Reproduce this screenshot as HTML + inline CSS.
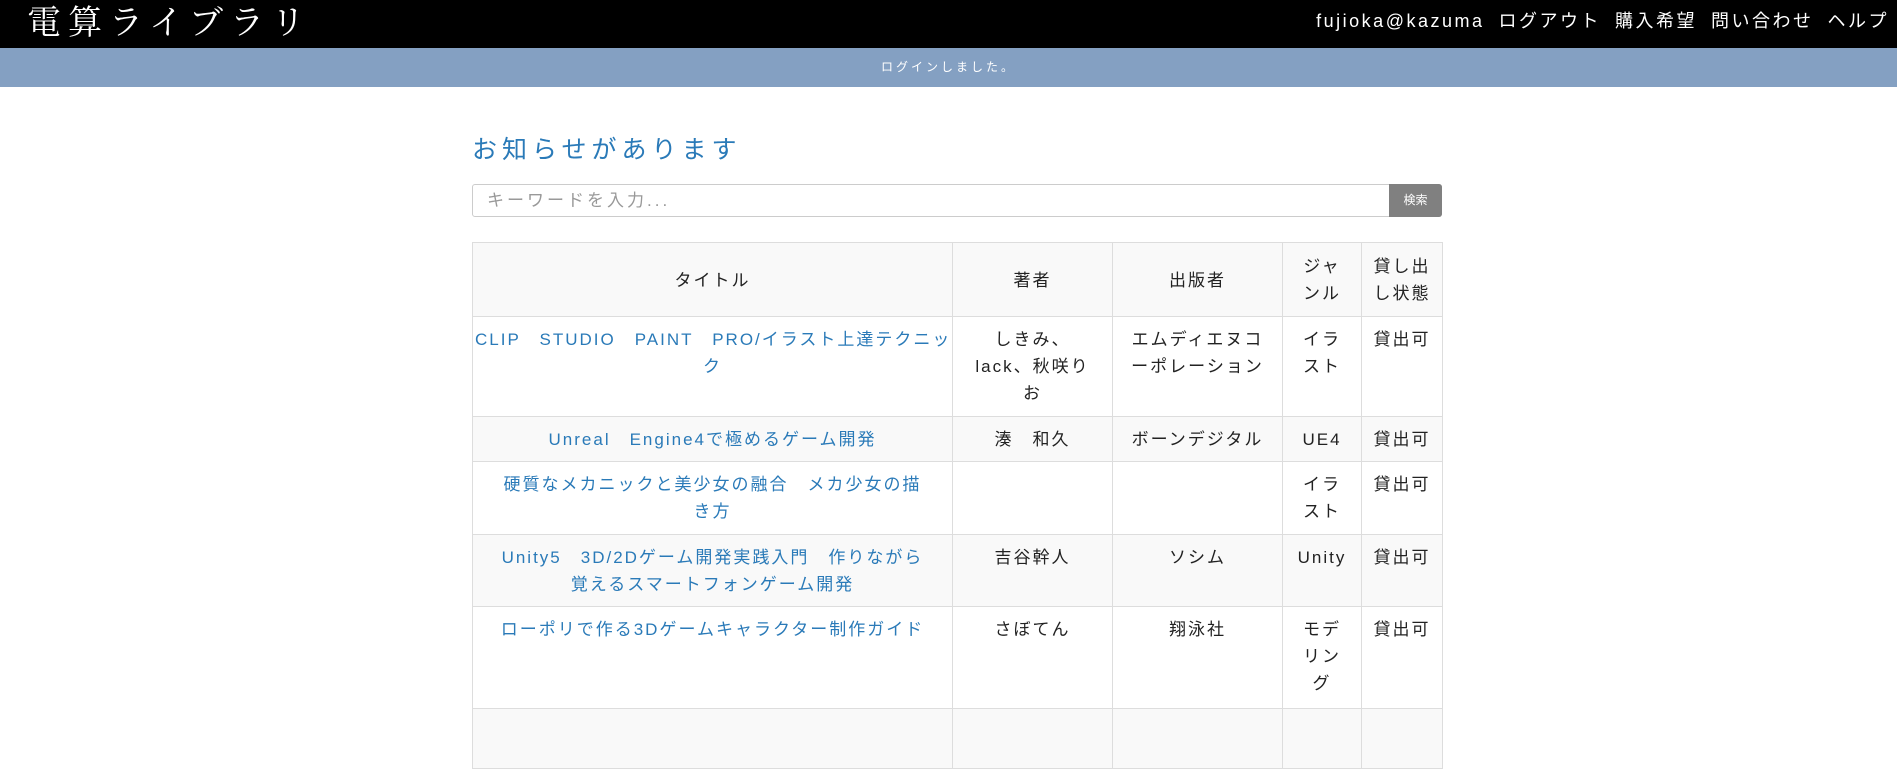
<!DOCTYPE html>
<html><head><meta charset="utf-8"><style>
*{margin:0;padding:0;box-sizing:border-box}
body{width:1897px;height:715px;overflow:hidden;background:#fff;font-family:"Liberation Sans","Noto Sans CJK JP",sans-serif;color:#222}
.top{height:48px;background:#000;position:relative;color:#fff}
.logo{position:absolute;left:27px;top:2px;font-size:34px;letter-spacing:7px;font-family:"Liberation Serif","Noto Serif CJK SC",serif;line-height:44px}
.nav{position:absolute;right:8px;top:9px;font-size:18px;letter-spacing:2.5px;line-height:24px;white-space:nowrap}
.nav span{margin-left:14px}
.flash{height:39px;background:#84a0c2;color:#fff;text-align:center;font-size:12px;letter-spacing:3px;line-height:39px}
h2{position:absolute;left:472px;top:134px;font-size:25px;font-weight:normal;color:#2a7ab8;letter-spacing:5px;line-height:32px}
.search{position:absolute;left:472px;top:184px;width:970px;height:33px;border:1px solid #ccc;border-radius:3px}
.search .ph{position:absolute;left:14px;top:0;line-height:31px;color:#999;font-size:17px;letter-spacing:3px}
.search .btn{position:absolute;right:-1px;top:-1px;width:53px;height:33px;background:#808080;color:#fff;font-size:12px;line-height:33px;text-align:center;border-radius:0 3px 3px 0}
table{position:absolute;left:472px;top:242px;width:970px;border-collapse:collapse;font-size:17px;letter-spacing:2px;table-layout:fixed}
td,th{border:1px solid #ddd;text-align:center;vertical-align:top;padding:9px 2px 8px;line-height:27px;font-weight:normal;white-space:nowrap;overflow:hidden}
th{vertical-align:middle;background:#f9f9f9}
a{color:#2a7ab8;text-decoration:none}
tr.g td{background:#f9f9f9}
</style></head><body>
<div class="top"><div class="logo">電算ライブラリ</div>
<div class="nav">fujioka@kazuma<span>ログアウト</span><span>購入希望</span><span>問い合わせ</span><span>ヘルプ</span></div></div>
<div class="flash">ログインしました。</div>
<h2>お知らせがあります</h2>
<div class="search"><div class="ph">キーワードを入力...</div><div class="btn">検索</div></div>
<table>
<colgroup><col style="width:480px"><col style="width:160px"><col style="width:170px"><col style="width:79px"><col style="width:81px"></colgroup>
<tr style="height:74px"><th>タイトル</th><th>著者</th><th>出版者</th><th>ジャ<br>ンル</th><th>貸し出<br>し状態</th></tr>
<tr style="height:100px"><td><a>CLIP　STUDIO　PAINT　PRO/イラスト上達テクニッ<br>ク</a></td><td>しきみ、<br>lack、秋咲り<br>お</td><td>エムディエヌコ<br>ーポレーション</td><td>イラ<br>スト</td><td>貸出可</td></tr>
<tr class="g" style="height:45px"><td><a>Unreal　Engine4で極めるゲーム開発</a></td><td>湊　和久</td><td>ボーンデジタル</td><td>UE4</td><td>貸出可</td></tr>
<tr style="height:73px"><td><a>硬質なメカニックと美少女の融合　メカ少女の描<br>き方</a></td><td></td><td></td><td>イラ<br>スト</td><td>貸出可</td></tr>
<tr class="g" style="height:72px"><td><a>Unity5　3D/2Dゲーム開発実践入門　作りながら<br>覚えるスマートフォンゲーム開発</a></td><td>吉谷幹人</td><td>ソシム</td><td>Unity</td><td>貸出可</td></tr>
<tr style="height:102px"><td><a>ローポリで作る3Dゲームキャラクター制作ガイド</a></td><td>さぼてん</td><td>翔泳社</td><td>モデ<br>リン<br>グ</td><td>貸出可</td></tr>
<tr class="g" style="height:60px"><td>&nbsp;</td><td></td><td></td><td></td><td></td></tr>
</table>
</body></html>
